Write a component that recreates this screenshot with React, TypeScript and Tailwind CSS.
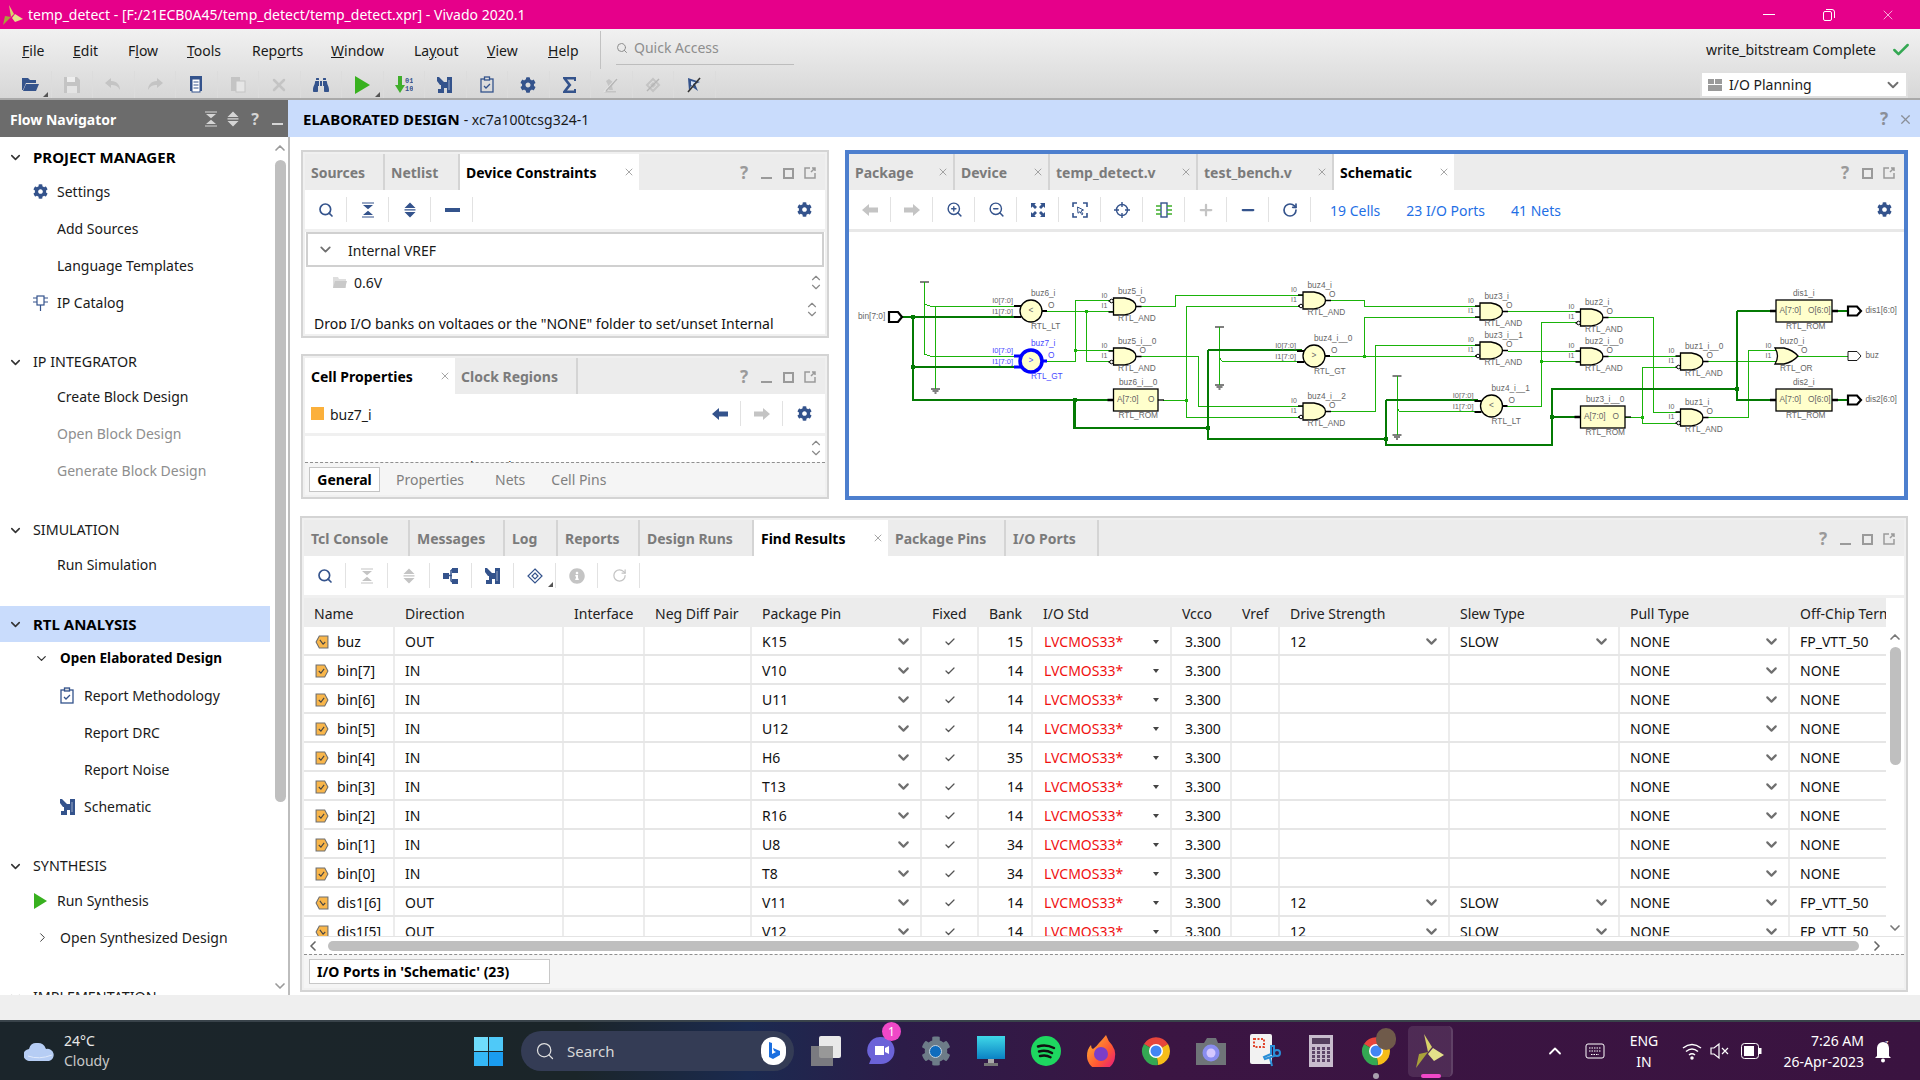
import React from "react";
import { ZoomIn, ZoomOut, RotateCw, Search, ChevronDown, ChevronUp, ChevronLeft, ChevronRight, Check, X, Plus, Minus } from "lucide-react";
import { FaCog, FaBinoculars, FaInfoCircle } from "react-icons/fa";

const NAVY = "#34538c";
const GREY = "#c4c4c4";

const Gear = ({ s = 15, c = NAVY }: { s?: number; c?: string }) => <FaCog size={s} color={c} />;

const Collapse = ({ c = NAVY }: { c?: string }) => (
  <svg width="14" height="16" viewBox="0 0 14 16"><path d="M1 .5h12v1H1zM2 3h10L7 7.300zM1 14.500h12v1H1zM2 13h10L7 8.700z" fill={c} /></svg>
);
const Expand = ({ c = NAVY }: { c?: string }) => (
  <svg width="14" height="16" viewBox="0 0 14 16"><path d="M7 0.500 12.500 6h-11zM7 15.500 1.500 10h11z" fill={c} /><path d="M1.500 7h11v.7h-11zM1.500 8.400h11v.7h-11z" fill={c} /></svg>
);
const ArrowL = ({ c = NAVY }: { c?: string }) => (
  <svg width="16" height="12" viewBox="0 0 16 12"><path d="M0 6 7 0v3.500h9v5H7V12z" fill={c} /></svg>
);
const ArrowR = ({ c = GREY }: { c?: string }) => (
  <svg width="16" height="12" viewBox="0 0 16 12"><path d="M16 6 9 0v3.500H0v5h9V12z" fill={c} /></svg>
);
const Schem = ({ c = NAVY }: { c?: string }) => (
  <svg width="16" height="16" viewBox="0 0 16 16"><path d="M0 0h2l5 5h3V0h5v16h-5v-5H7v5H1v-4h3V8H3L0 4z" fill={c} /><path d="M11 3h2v10h-2z" fill="#fff" opacity=".25" /></svg>
);
const Fit = () => (
  <svg width="16" height="16" viewBox="0 0 16 16" fill={NAVY}><path d="M1 1h5L4.500 2.500 7 5 5 7 2.500 4.500 1 6zM15 1v5l-1.500-1.500L11 7 9 5l2.500-2.500L10 1zM1 15v-5l1.500 1.500L5 9l2 2-2.500 2.500L6 15zM15 15h-5l1.500-1.500L9 11l2-2 2.500 2.500L15 10z" /></svg>
);
const Select = () => (
  <svg width="16" height="16" viewBox="0 0 16 16" fill="none" stroke={NAVY} strokeWidth="1.600"><path d="M1 5V1h4M11 1h4v4M1 11v4h4M15 11v4h-4" /><path d="M5.500 5l6 3-2.500 1 2 3-1.200.7-1.800-3-2 1.500z" strokeWidth="1" /></svg>
);
const Target = () => (
  <svg width="16" height="16" viewBox="0 0 16 16" fill="none" stroke={NAVY} strokeWidth="1.400"><circle cx="8" cy="8" r="5.500" /><path d="M8 0v5M8 11v5M0 8h5M11 8h5" /></svg>
);
const Chip = () => (
  <svg width="16" height="16" viewBox="0 0 16 16" fill="none"><rect x="5" y="1" width="6" height="14" stroke={NAVY} strokeWidth="1.400" /><path d="M0 4h5M0 8h5M0 12h5M11 4h5M11 8h5M11 12h5" stroke="#3fae2a" strokeWidth="1.600" /></svg>
);
const Doc = ({ c = NAVY }: { c?: string }) => (
  <svg width="16" height="17" viewBox="0 0 16 17"><rect x="2" y="0" width="12" height="15" fill={c} /><rect x="4" y="3" width="8" height="13" fill="#fff" stroke={c} /><path d="M5.500 6h5M5.500 9h5M5.500 12h5" stroke={c} /></svg>
);
const Paste = () => (
  <svg width="16" height="17" viewBox="0 0 16 17"><rect x="1" y="1" width="9" height="14" fill={GREY} /><rect x="6" y="5" width="9" height="11" fill="#e6e6e6" stroke={GREY} /></svg>
);
const Save = () => (
  <svg width="16" height="16" viewBox="0 0 16 16"><path d="M0 0h13l3 3v13H0z" fill={GREY} /><rect x="3" y="0" width="8" height="5" fill="#eee" /><rect x="3" y="9" width="10" height="7" fill="#e4e4e4" /></svg>
);
const Open = () => (
  <svg width="17" height="15" viewBox="0 0 17 15"><path d="M0 1h6l2 2h6v3H4L1 13H0z" fill={NAVY} /><path d="M4 7h13l-3 7H1z" fill={NAVY} /></svg>
);
const Undo = ({ flip }: { flip?: boolean }) => (
  <svg width="16" height="13" viewBox="0 0 16 13" className={flip ? "-scale-x-100" : ""}><path d="M6 0 0 5l6 5V7c4 0 7 1 9 5 0-5-3-9-9-9z" fill={GREY} /></svg>
);
const Bits = () => (
  <svg width="18" height="18" viewBox="0 0 18 18"><path d="M3 0h4v9h3l-5 8-5-8h3z" fill="#3fae2a" /><text x="10" y="7" fontSize="7" fontFamily="Liberation Mono" fontWeight="700" fill={NAVY}>01</text><text x="10" y="15" fontSize="7" fontFamily="Liberation Mono" fontWeight="700" fill={NAVY}>10</text></svg>
);
const Clip = () => (
  <svg width="14" height="17" viewBox="0 0 14 17" fill="none" stroke={NAVY} strokeWidth="1.300"><rect x="1" y="3" width="12" height="13" /><rect x="4.500" y="1" width="5" height="3" fill="#e0e0e0" /><path d="M4 10l2 2 4-4" /></svg>
);
const Sigma = () => (
  <svg width="15" height="16" viewBox="0 0 15 16"><path d="M1 0h13v4h-2V2.500H5L9.500 8 5 13.500h7V12h2v4H1v-1.500L6 8 1 1.500z" fill={NAVY} /></svg>
);
const NoHammer = () => (
  <svg width="16" height="16" viewBox="0 0 16 16"><path d="M1 14h12v1.500H1zM3 4l3-2 5 4-2 3 1 4H6L5 8z" fill={GREY} /><path d="M1 15 14 1" stroke="#e4e4e4" strokeWidth="1.600" /><path d="M3 14 14 2" stroke="#b5b5b5" strokeWidth="1.200" /></svg>
);
const NoDiamond = () => (
  <svg width="16" height="16" viewBox="0 0 16 16" fill="none"><path d="M8 2l6 6-6 6-6-6z" stroke={GREY} strokeWidth="2" /><path d="M5 8l3-3 3 3-3 3z" fill={GREY} /><path d="M2 14 14 2" stroke="#b5b5b5" strokeWidth="1.400" /></svg>
);
const NoStar = () => (
  <svg width="16" height="16" viewBox="0 0 16 16"><path d="M2 1l12 4-5 2 3 7-7-5-2 5z" fill={NAVY} /><path d="M5 4l5 1.500-3 1.500 1 3-3-2z" fill="#d8e3f5" /><path d="M2 15 14 1" stroke="#333" strokeWidth="1.600" /></svg>
);
const Folder = () => (
  <svg width="14" height="12" viewBox="0 0 14 12"><path d="M0 1h5l1 2h7v9H0z" fill="#dedede" /><path d="M2 5h12l-2 7H0z" fill="#c9c9c9" /></svg>
);
const Tree = ({ c = NAVY }: { c?: string }) => (
  <svg width="16" height="16" viewBox="0 0 16 16" fill={c}><rect x="0" y="5" width="6" height="6" /><rect x="9" y="0" width="6" height="5" /><rect x="9" y="11" width="6" height="5" /><path d="M6 7.500h3M8 2h2M8 13.500h2M8 2v11.500" stroke={c} fill="none" strokeWidth="1.500" /></svg>
);
const Diamond = () => (
  <svg width="16" height="16" viewBox="0 0 16 16" fill="none" stroke={NAVY} strokeWidth="1.200"><path d="M8 1l7 7-7 7-7-7z" /><path d="M8 5l3 3-3 3-3-3z" /></svg>
);
const Corner = () => <span className="absolute right-[3px] bottom-[1px] w-0 h-0 border-l-[5px] border-l-transparent border-b-[5px] border-b-[#555]" />;
const Ipcat = () => (
  <svg width="15" height="16" viewBox="0 0 15 16" fill="none" stroke={NAVY} strokeWidth="1.200"><rect x="4" y="1" width="7" height="9" /><path d="M0 3h4M0 7h4M11 3h4M11 7h4M7.500 10v6" /></svg>
);

const Win = ({ min = true }: { min?: boolean }) => (
  <div className="ml-auto flex items-center h-[36px] pt-[2px]">
    <span className="w-[22px] text-center text-[17px] font-bold text-[#9a9a9a]">?</span>
    {min && <span className="w-[22px] flex justify-center pt-[10px]"><span className="w-[11px] h-[2px] bg-[#9a9a9a]" /></span>}
    <span className="w-[22px] flex justify-center"><span className="w-[11px] h-[11px] border-2 border-[#9a9a9a]" /></span>
    <span className="w-[22px] flex justify-center">
      <svg width="12" height="12" viewBox="0 0 12 12" fill="none" stroke="#9a9a9a" strokeWidth="1.500"><path d="M6 1H1v10h10V6M7 5l4-4M8 1h3v3" /></svg>
    </span>
    <span className="w-[4px]" />
  </div>
);

const Tab = ({ label, active, close, className }: { label: string; active?: boolean; close?: boolean; className: string }) => (
  <div className={`h-[36px] flex items-center pl-[6px] shrink-0 ${active ? "bg-white text-black" : "bg-[#ececec] text-[#7b7b7b] border-r-2 border-[#d4d4d4]"} ${className}`}>
    <span className="text-[14px] font-bold whitespace-nowrap">{label}</span>
    {close && <X size={12} strokeWidth={1.5} className="ml-auto mr-[4px] text-[#8a8a8a]" />}
  </div>
);

const TB = ({ children, sep = true }: { children: React.ReactNode; sep?: boolean }) => (
  <div className="relative w-[42px] h-[25px] flex items-center justify-center shrink-0">
    {children}
    {sep && <span className="absolute right-0 top-0 h-[25px] w-px bg-[#e2e2e2]" />}
  </div>
);

const Panel = ({ className, children }: { className: string; children: React.ReactNode }) => (
  <div className={`flex flex-col bg-[#f0f0f0] overflow-hidden ${className}`}>{children}</div>
);

const Toolbar = ({ children }: { children: React.ReactNode }) => (
  <div className="h-[39px] bg-white flex items-center shrink-0">{children}</div>
);

/* ---------- Schematic ---------- */
const THIN = "#1ab30a";
const THICK = "#047a04";

const thin: number[][] = [
  [924.5,282,924.5,354,930,356,1014,356],[924.5,304,930,306,1014,306],[935.5,306,935.5,389],[1047,311,1113,311],
  [1047,361,1075,361,1075,300.5,1113,300.5],[1075,350,1113,350],[1086,311,1086,361,1113,361],
  [1141,306.5,1175,306.5,1175,295,1303,295],[1186,306,1303,306],[1186,306,1186,417,1303,417],[1163,400,1186,400],
  [1141,356.5,1198,356.5,1198,406,1303,406],[1219.5,327,1219.5,385],[1219.5,358,1222,361,1303,361],
  [1325,356,1478,356],[1364,356,1364,317,1480,317],[1330,300.5,1364,300.5,1364,306,1480,306],
  [1330,411.5,1375,411.5,1375,345,1480,345],[1508,311.5,1580,311.5],[1508,351,1580,351],
  [1502,406,1541,406,1541,322,1580,322],[1541,361,1580,361],[1397,376,1397,435],[1397,408,1399,411,1478,411],
  [1608,317.5,1653,317.5,1653,412,1680,412],[1608,356.5,1680,356.5],[1625,417,1642,417],[1642,367.5,1642,423],
  [1642,367.5,1678,367.5],[1642,423,1678,423],[1708,361.5,1778,361.5],[1708,417.5,1748,417.5,1748,350,1780,350],
  [1798,356,1848,356],
];
const thick: number[][] = [
  [902,317,1014,317],[913,317,913,400,1114,400],[913,367,1014,367],[1074.5,400,1074.5,428,1208,428],
  [1208,350,1208,439,1386,439],[1208,350,1302,350],[1386,400,1386,445,1552,445,1552,389,1737,389],[1386,400,1478,400],
  [1552,417,1580,417],[1737,311,1737,400,1770,400],[1737,311,1770,311],[1838,311,1848,311],[1838,400,1848,400],
];
const jun: number[][] = [[913,317],[913,367],[1074.5,400],[1208,428],[1386,439],[1552,417],[1737,389]];
const thinJun: number[][] = [[1086,311],[1075,350],[1186,400],[1364,356],[1541,361],[1642,417]];
const T = ({ x, y, s, c = "#666", size = 8.3, anchor }: { x: number; y: number; s: string; c?: string; size?: number; anchor?: "start" | "end" | "middle" }) => (
  <text x={x} y={y} fontSize={size} fill={c} fontFamily="Liberation Sans, sans-serif" dominantBaseline="middle" textAnchor={anchor}>{s}</text>
);
const ands: { x: number; t: number; n: string; b?: 0 | 1 }[] = [
  { x: 1113.5, t: 298, n: "buz5_i", b: 0 }, { x: 1113.5, t: 348, n: "buz5_i__0", b: 1 }, { x: 1303, t: 292, n: "buz4_i", b: 1 },
  { x: 1303, t: 403, n: "buz4_i__2", b: 1 }, { x: 1480, t: 303, n: "buz3_i" }, { x: 1480, t: 342, n: "buz3_i__1", b: 1 },
  { x: 1580.5, t: 309, n: "buz2_i", b: 1 }, { x: 1580.5, t: 348, n: "buz2_i__0" }, { x: 1680.5, t: 353, n: "buz1_i__0", b: 1 },
  { x: 1680.5, t: 409, n: "buz1_i", b: 1 },
];
const And = ({ x, t, n, b }: { x: number; t: number; n: string; b?: 0 | 1 }) => (
  <g>
    <path d={`M${x} ${t}h11q11.500 2 11.500 8.500t-11.500 8.500h-11z`} fill="#ffffcc" stroke="#000" strokeWidth="1.300" />
    <path d={`M${x - 5} ${t + 3}h5M${x - 5} ${t + 14}h5M${x + 22} ${t + 8.5}h6`} stroke="#000" strokeWidth="1.300" />
    {b !== undefined && <circle cx={x - 2} cy={t + (b ? 14 : 3)} r="1.800" fill="#fff" stroke="#000" />}
    <T x={x + 4.5} y={t - 6} s={n} />
    <T x={x - 9} y={t - 2} s="I0" size={7} anchor="middle" />
    <T x={x - 9} y={t + 8} s="I1" size={7} anchor="middle" />
    <T x={x + 26} y={t + 3} s="O" />
    <T x={x + 4.5} y={t + 21} s="RTL_AND" />
  </g>
);
const Cmp = ({ x, y, n, rtl, sym, blue, lx }: { x: number; y: number; n: string; rtl: string; sym: string; blue?: boolean; lx?: number }) => {
  const c = blue ? "#4a4aff" : "#666";
  const st = blue ? "#0000ff" : "#000";
  return (
    <g>
      <path d={`M${x - 17} ${y - 5}h7M${x - 17} ${y + 6}h7M${x + 11} ${y}h5`} stroke={st} strokeWidth={blue ? 3 : 1.800} />
      <circle cx={x} cy={y} r="11" fill="#ffffcc" stroke={st} strokeWidth={blue ? 3.500 : 1.300} />
      <T x={x} y={y} s={sym} c={c} anchor="middle" />
      <T x={lx ?? x} y={y - 17} s={n} c={c} />
      <T x={x - 18} y={y - 10} s="I0[7:0]" c={c} size={7.500} anchor="end" />
      <T x={x - 18} y={y + 1} s="I1[7:0]" c={c} size={7.500} anchor="end" />
      <T x={x + 17} y={y - 5} s="O" c={c} />
      <T x={lx ?? x} y={y + 16} s={rtl} c={c} />
    </g>
  );
};
const Rom = ({ x, y, w, n, lx, ox, o, ly }: { x: number; y: number; w: number; n: string; lx: number; ox: number; o: string; ly?: number }) => (
  <g>
    <rect x={x} y={y} width={w} height="22" fill="#ffffcc" stroke="#000" strokeWidth="1.300" />
    <path d={`M${x - 6} ${y + 11}h6`} stroke="#000" strokeWidth="2.500" />
    <path d={`M${x + w} ${y + 11}h6`} stroke="#000" strokeWidth={o === "O" ? 1.300 : 2.500} />
    <T x={lx} y={y - 6} s={n} />
    <T x={x + 3.5} y={y + 11} s="A[7:0]" />
    <T x={ox} y={y + 11} s={o} />
    <T x={ly ?? x + 5} y={y + 27} s="RTL_ROM" />
  </g>
);
const Rail = ({ x, t }: { x: number; t: number }) => <path d={`M${x - 4.5} ${t}h9`} stroke="#000" />;
const Gnd = ({ x, b }: { x: number; b: number }) => <path d={`M${x - 4.5} ${b}h9M${x - 3} ${b + 2}h6M${x - 1} ${b + 4}h2`} stroke="#000" />;
const Port = ({ y, heavy, n }: { y: number; heavy?: boolean; n: string }) => (
  <g>
    <path d={`M1848 ${y - 4.5}h9l4 4.500-4 4.500h-9z`} fill="#fff" stroke="#000" strokeWidth={heavy ? 2.200 : 0.900} />
    <T x={1865.5} y={y} s={n} />
  </g>
);

const Schematic = () => (
  <svg width="1055" height="264" viewBox="849 232 1055 264" className="block bg-white">
    <Rail x={924.5} t={282} />
    <Rail x={1219.5} t={327} />
    <Rail x={1397} t={376} />
    <Gnd x={935.5} b={389} />
    <Gnd x={1219.5} b={385} />
    <Gnd x={1397} b={435} />
    <g shapeRendering="crispEdges" fill="none">
      {thin.map((p, i) => <polyline key={i} points={p.join(",")} stroke={THIN} strokeWidth="1" />)}
      {thick.map((p, i) => <polyline key={i} points={p.join(",")} stroke={THICK} strokeWidth="2.200" />)}
      {jun.map(([x, y], i) => <rect key={i} x={x - 2} y={y - 2} width="4" height="4" fill={THICK} />)}
      {thinJun.map(([x, y], i) => <rect key={i} x={x - 1.5} y={y - 1.5} width="3" height="3" fill={THIN} />)}
    </g>
    <T x={858} y={317} s="bin[7:0]" />
    <path d="M889 312h9l4 5-4 5h-9z" fill="#fff" stroke="#000" strokeWidth="2.200" />
    <Cmp x={1031} y={311} n="buz6_i" rtl="RTL_LT" sym="<" />
    <Cmp x={1031} y={361} n="buz7_i" rtl="RTL_GT" sym=">" blue />
    <Cmp x={1314} y={356} n="buz4_i__0" rtl="RTL_GT" sym=">" />
    <Cmp x={1491.5} y={406} n="buz4_i__1" rtl="RTL_LT" sym="<" />
    {ands.map((a) => <And key={a.n} {...a} />)}
    <Rom x={1113.5} y={389} w={44.5} n="buz6_i__0" lx={1119} ox={1148} o="O" />
    <Rom x={1580.5} y={406} w={44.5} n="buz3_i__0" lx={1586} ox={1612.5} o="O" />
    <Rom x={1776} y={300} w={56} n="dis1_i" lx={1793} ox={1808} o="O[6:0]" ly={1786} />
    <Rom x={1776} y={389} w={56} n="dis2_i" lx={1793} ox={1808} o="O[6:0]" ly={1786} />
    <g>
      <path d="M1775 348q5 8 0 16h9q9-2 14-8-5-6-14-8z" fill="#ffffcc" stroke="#000" strokeWidth="1.300" />
      <T x={1780} y={342} s="buz0_i" />
      <T x={1768.5} y={346} s="I0" size={7} anchor="middle" />
      <T x={1768.5} y={356} s="I1" size={7} anchor="middle" />
      <T x={1801} y={351} s="O" />
      <T x={1780} y={369} s="RTL_OR" />
    </g>
    <Port y={311} heavy n="dis1[6:0]" />
    <Port y={356} n="buz" />
    <Port y={400} heavy n="dis2[6:0]" />
  </svg>
);

/* ---------- Table ---------- */
const cols = ["w-[91px]", "w-[169px]", "w-[81px]", "w-[107px]", "w-[170px]", "w-[57px]", "w-[54px]", "w-[139px]", "w-[60px]", "w-[48px]", "w-[170px]", "w-[170px]", "w-[170px]", "w-[96px]"];
const heads = ["Name", "Direction", "Interface", "Neg Diff Pair", "Package Pin", "Fixed", "Bank", "I/O Std", "Vcco", "Vref", "Drive Strength", "Slew Type", "Pull Type", "Off-Chip Termination"];
type R = [string, string, string, string];
const rows: R[] = [
  ["buz", "OUT", "K15", "15"], ["bin[7]", "IN", "V10", "14"], ["bin[6]", "IN", "U11", "14"], ["bin[5]", "IN", "U12", "14"],
  ["bin[4]", "IN", "H6", "35"], ["bin[3]", "IN", "T13", "14"], ["bin[2]", "IN", "R16", "14"], ["bin[1]", "IN", "U8", "34"],
  ["bin[0]", "IN", "T8", "34"], ["dis1[6]", "OUT", "V11", "14"], ["dis1[5]", "OUT", "V12", "14"],
];
const PortIcon = ({ out }: { out: boolean }) => (
  <svg width="14" height="14" viewBox="0 0 13 13" className={`shrink-0 ${out ? "-scale-x-100" : ""}`}>
    <path d="M1 1h8l3 5.500-3 5.500H1z" fill="#f9b64a" stroke="#6e6e6e" />
    <path d="M3.500 6.500l2 2 3-4" fill="none" stroke="#444" />
  </svg>
);
const Cell = ({ i, children, cn = "" }: { i: number; children?: React.ReactNode; cn?: string }) => (
  <div className={`${cols[i]} shrink-0 h-full flex items-center pt-[2px] pl-[10px] pr-[10px] border-r-2 border-[#ececec] overflow-hidden whitespace-nowrap ${cn}`}>{children}</div>
);
const Dd = () => <ChevronDown size={17} strokeWidth={3} className="ml-auto -mr-[2px] text-[#6f6f6f] shrink-0" />;

const IOTable = () => (
  <div className="h-[338px] overflow-hidden bg-white flex-1 min-w-0">
    <div className="h-[29px] flex bg-[#ececec] text-[#222]">
      {heads.map((h, i) => <Cell key={h} i={i} cn={i === 0 ? "!pl-[10px] border-[#dcdcdc]" : i === 13 ? "!pr-0 !border-0" : "border-[#dcdcdc]"}>{h}</Cell>)}
    </div>
    {rows.map(([n, d, p, b]) => {
      const out = d === "OUT";
      return (
        <div key={n} className="h-[29px] flex border-b-2 border-[#e6e6e6] text-[#111]">
          <Cell i={0} cn="!pl-[11px] gap-[8px]"><PortIcon out={out} /><span>{n}</span></Cell>
          <Cell i={1}>{d}</Cell>
          <Cell i={2} />
          <Cell i={3} />
          <Cell i={4}><span>{p}</span><Dd /></Cell>
          <Cell i={5} cn="justify-center !pl-0 !pr-0"><Check size={12} strokeWidth={2.5} className="text-[#555]" /></Cell>
          <Cell i={6} cn="justify-end !pr-[8px] !pl-0">{b}</Cell>
          <Cell i={7} cn="!pl-[11px]"><span className="text-[#f01010]">LVCMOS33*</span><span className="ml-auto mr-[1px] w-0 h-0 border-x-[3.5px] border-x-transparent border-t-[4px] border-t-[#444]" /></Cell>
          <Cell i={8} cn="!pl-[13px]">3.300</Cell>
          <Cell i={9} />
          <Cell i={10}>{out && <><span>12</span><Dd /></>}</Cell>
          <Cell i={11}>{out && <><span>SLOW</span><Dd /></>}</Cell>
          <Cell i={12}><span>NONE</span><Dd /></Cell>
          <Cell i={13} cn="!border-0 !pr-0">{out ? "FP_VTT_50" : "NONE"}</Cell>
        </div>
      );
    })}
  </div>
);

/* ---------- Nav ---------- */
const Sec = ({ label, bold, active, mt = true }: { label: string; bold?: boolean; active?: boolean; mt?: boolean }) => (
  <div className={`flex items-center shrink-0 ${active ? "bg-[#c9dcfc] h-[36px] mt-[23px] -mb-[2px] relative z-0" : "h-[32px]"} ${!active && mt ? "mt-[25px]" : ""}`}>
    <ChevronDown size={15} strokeWidth={2.5} className="ml-[8px] text-[#333]" />
    <span className={`ml-[10px] whitespace-nowrap ${bold ? "text-[15px] font-bold text-black" : "text-[14.3px] text-[#1a1a1a]"}`}>{label}</span>
  </div>
);
const Item = ({ label, icon, pl, grey, bold }: { label: string; icon?: React.ReactNode; pl: string; grey?: boolean; bold?: boolean }) => (
  <div className={`h-[37px] flex items-center shrink-0 relative ${pl}`}>
    {icon}
    <span className={`whitespace-nowrap ${grey ? "text-[#8e8e8e]" : "text-[#1a1a1a]"} ${bold ? "text-[13.5px] font-bold text-black" : "text-[14px]"}`}>{label}</span>
  </div>
);
const IcoL = ({ children, cn }: { children: React.ReactNode; cn: string }) => <span className={`absolute top-0 h-full flex items-center ${cn}`}>{children}</span>;

const Nav = () => (
  <div className="w-[290px] shrink-0 flex border-r-2 border-[#bdbdbd] h-full bg-white">
    <div className="w-[270px] pt-[4px] overflow-hidden h-full flex flex-col">
      <Sec label="PROJECT MANAGER" bold mt={false} />
      <Item pl="pl-[57px]" label="Settings" icon={<IcoL cn="left-[33px]"><Gear /></IcoL>} />
      <Item pl="pl-[57px]" label="Add Sources" />
      <Item pl="pl-[57px]" label="Language Templates" />
      <Item pl="pl-[57px]" label="IP Catalog" icon={<IcoL cn="left-[33px]"><Ipcat /></IcoL>} />
      <Sec label="IP INTEGRATOR" />
      <Item pl="pl-[57px]" label="Create Block Design" />
      <Item pl="pl-[57px]" label="Open Block Design" grey />
      <Item pl="pl-[57px]" label="Generate Block Design" grey />
      <Sec label="SIMULATION" />
      <Item pl="pl-[57px]" label="Run Simulation" />
      <Sec label="RTL ANALYSIS" bold active />
      <Item pl="pl-[60px]" bold label="Open Elaborated Design" icon={<IcoL cn="left-[34px]"><ChevronDown size={15} strokeWidth={2} className="text-[#333]" /></IcoL>} />
      <Item pl="pl-[84px]" label="Report Methodology" icon={<IcoL cn="left-[60px]"><Clip /></IcoL>} />
      <Item pl="pl-[84px]" label="Report DRC" />
      <Item pl="pl-[84px]" label="Report Noise" />
      <Item pl="pl-[84px]" label="Schematic" icon={<IcoL cn="left-[60px]"><Schem /></IcoL>} />
      <Sec label="SYNTHESIS" />
      <Item pl="pl-[57px]" label="Run Synthesis" icon={<IcoL cn="left-[34px]"><svg width="13" height="16" viewBox="0 0 13 16"><path d="M0 0l13 8-13 8z" fill="#38b11f" /></svg></IcoL>} />
      <Item pl="pl-[60px]" label="Open Synthesized Design" icon={<IcoL cn="left-[35px]"><ChevronRight size={15} strokeWidth={1.5} className="text-[#333]" /></IcoL>} />
      <Sec label="IMPLEMENTATION" />
    </div>
    <div className="w-[18px] flex flex-col items-center pt-[3px]">
      <ChevronUp size={16} strokeWidth={2.5} className="text-[#9a9a9a] ml-[2px]" />
      <div className="w-[11px] h-[642px] mt-[4px] ml-[3px] rounded-full bg-[#bfbfbf]" />
      <ChevronDown size={16} strokeWidth={2.5} className="mt-auto mb-[1px] ml-[2px] text-[#9a9a9a]" />
    </div>
  </div>
);

/* ---------- Taskbar icons ---------- */
const ChromeI = () => (
  <svg width="30" height="30" viewBox="0 0 30 30">
    <path d="M15 15 3 8a14 14 0 0 1 24 0z" fill="#e8453c" />
    <path d="M15 15 27 8a14 14 0 0 1-10 21z" fill="#f6bd19" />
    <path d="M15 15 17 29A14 14 0 0 1 3 8z" fill="#34a853" />
    <circle cx="15" cy="15" r="7" fill="#fff" />
    <circle cx="15" cy="15" r="5.500" fill="#4285f4" />
  </svg>
);
const TI = ({ children }: { children: React.ReactNode }) => <div className="relative w-[55px] h-[60px] flex items-center justify-center shrink-0">{children}</div>;

const Taskbar = () => (
  <div className="h-[60px] shrink-0 flex items-center border-t-2 border-[#39434a] text-white bg-[linear-gradient(90deg,#1b252b_0%,#1b2529_30%,#1b2a50_39%,#2c1c48_47%,#3b1543_60%,#3a1340_100%)]">
    <div className="w-[474px] shrink-0 pl-[24px] flex items-center gap-[9px]">
      <svg width="31" height="20" viewBox="0 0 31 20"><path d="M6 20a6 6 0 0 1-1-12 7 7 0 0 1 8-6 8 8 0 0 1 9 6 6 6 0 0 1 3 12z" fill="#b6cdf4" /><path d="M4 15q11 4 24-1" stroke="#dfe9fb" fill="none" /></svg>
      <div className="text-[14px] leading-[20px] text-[#e8e8e8] -mt-[1px]"><div>24°C</div><div className="text-[#c8c8c8]">Cloudy</div></div>
    </div>
    <div className="w-[29px] h-[29px] shrink-0 grid grid-cols-2 gap-px">
      <span className="bg-[#6fdcfb]" /><span className="bg-[#4fc9f8]" /><span className="bg-[#35b8f7]" /><span className="bg-[#1a9cf0]" />
    </div>
    <div className="ml-[18px] w-[273px] h-[40px] rounded-full bg-[#343c55] flex items-center pl-[14px] pr-[8px] shrink-0">
      <Search size={20} strokeWidth={1.5} className="text-[#e0e0e0]" />
      <span className="ml-[12px] text-[15px] text-[#d8d8d8]">Search</span>
      <span className="ml-auto w-[25px] h-[28px] rounded-[12px] bg-white flex items-center justify-center">
        <svg width="12" height="18" viewBox="0 0 12 18"><path d="M1 0l3 1v11l4-2-2-1-1-3 7 3v4l-7 4-4-2z" fill="#1a6fe0" /></svg>
      </span>
    </div>
    <div className="ml-[4px] flex items-center">
      <TI><span className="w-[30px] h-[30px] relative"><span className="absolute right-0 top-0 w-[22px] h-[22px] rounded-[2px] bg-[#e9e9e9]" /><span className="absolute left-0 bottom-0 w-[22px] h-[20px] bg-[#8a8a8a]/85" /></span></TI>
      <TI>
        <svg width="30" height="32" viewBox="0 0 30 32"><path d="M15 2a13 13 0 0 1 0 27H3l2-5a13 13 0 0 1 10-22z" fill="#6b63d8" /><path d="M9 11h9v9H9zM19 13l4-2v8l-4-2z" fill="#fff" /></svg>
        <span className="absolute top-[1px] right-[7px] w-[19px] h-[19px] rounded-full bg-[#f048c8] text-[12px] flex items-center justify-center">1</span>
      </TI>
      <TI>
        <FaCog size={30} color="#6d7c88" />
        <span className="absolute w-[13px] h-[13px] rounded-full bg-[#0f6cbd] border border-[#c7d4de]" />
      </TI>
      <TI><svg width="28" height="30" viewBox="0 0 28 30"><defs><linearGradient id="mon" x1="0" y1="0" x2="0" y2="1"><stop offset="0" stopColor="#3fd8e8" /><stop offset="1" stopColor="#0b82c4" /></linearGradient></defs><rect y="0" width="28" height="23" fill="url(#mon)" /><rect x="11" y="23" width="6" height="4" fill="#aaa" /><rect x="7" y="27" width="14" height="3" fill="#777" /></svg></TI>
      <TI><svg width="30" height="30" viewBox="0 0 30 30"><circle cx="15" cy="15" r="15" fill="#1ed760" /><path d="M7 10.500q8-2.500 16 1.500M8 15.500q7-2 13 1.500M9 20q6-1.500 10.500 1.200" stroke="#111" strokeWidth="2.500" fill="none" strokeLinecap="round" /></svg></TI>
      <TI><svg width="30" height="32" viewBox="0 0 30 32"><defs><linearGradient id="ff" x1="0" y1="0" x2="1" y2="1"><stop offset="0" stopColor="#ffbd2e" /><stop offset=".6" stopColor="#ff5634" /><stop offset="1" stopColor="#e31587" /></linearGradient></defs><path d="M20 0q2 6 6 10 4 6 3 11a14 14 0 0 1-28 0q0-7 4-11 0 3 2 4 4-3 6-6 3-3 7-8z" fill="url(#ff)" /><circle cx="15" cy="19" r="7" fill="#7a3ec8" /></svg></TI>
      <TI><ChromeI /></TI>
      <TI><svg width="30" height="28" viewBox="0 0 30 28"><path d="M0 6h8l3-5h9l2 5h8v22H0z" fill="#6f7478" /><circle cx="15" cy="16" r="8.500" fill="#8a8df0" /><circle cx="15" cy="16" r="4.500" fill="#d5c8ff" /></svg></TI>
      <TI><svg width="32" height="34" viewBox="0 0 32 34"><rect width="22" height="30" rx="2" fill="#f2f2f2" /><path d="M4 5h10v8H4z" fill="none" stroke="#e0452c" strokeWidth="2" strokeDasharray="2 1.500" /><path d="M24 12v10l-9 3-1-2 7-3v-8zM20 24l2 8" stroke="#2a8fd8" strokeWidth="2" fill="none" /><circle cx="27" cy="19" r="3" fill="none" stroke="#2a8fd8" strokeWidth="2" /></svg></TI>
      <TI><svg width="24" height="32" viewBox="0 0 24 32"><rect width="24" height="32" fill="#c8bccd" /><rect x="3" y="3" width="18" height="6" fill="#55405e" /><g fill="#5d4568">{[12, 16, 20, 24].map((y) => [3, 8, 13, 18].map((x) => <rect key={`${x}${y}`} x={x} y={y} width="3" height="3" />))}</g></svg></TI>
      <TI>
        <ChromeI />
        <span className="absolute top-[7px] right-[7px] w-[20px] h-[22px] rounded-full bg-[#6f5a4a]" />
        <span className="absolute bottom-[2px] w-[6px] h-[6px] rounded-full bg-[#a9a0ae]" />
      </TI>
      <TI>
        <span className="absolute top-[5px] bottom-[4px] left-[5px] right-[5px] rounded-[5px] bg-white/10 border-r-2 border-white/10" />
        <svg width="30" height="34" viewBox="0 0 30 34" className="relative"><path d="M8 0l8 13-4 5z" fill="#d9d26a" /><path d="M12 18 0 34l3-14z" fill="#a9a13a" /><path d="M17 14l11 7-10 6-6-7z" fill="#e4e18a" /></svg>
        <span className="absolute bottom-[3px] w-[20px] h-[4px] rounded-full bg-[#f048c8]" />
      </TI>
    </div>
    <ChevronUp size={20} strokeWidth={2.2} className="ml-[87px] text-white shrink-0" />
    <svg width="20" height="20" viewBox="0 0 20 20" className="ml-[20px] shrink-0" fill="none" stroke="#fff"><rect x="1" y="3" width="18" height="14" rx="2" /><path d="M4 7h12M4 10h12M6 13.500h8" strokeDasharray="1.500 1" /></svg>
    <div className="ml-[20px] w-[38px] text-center text-[14px] leading-[21px] shrink-0"><div>ENG</div><div>IN</div></div>
    <svg width="20" height="18" viewBox="0 0 20 18" className="ml-[19px] shrink-0" fill="none" stroke="#fff" strokeWidth="1.500"><path d="M1 6q9-7 18 0M4 9.500q6-5 12 0M7 13q3-2.500 6 0" /><circle cx="10" cy="16" r="1" fill="#fff" /></svg>
    <svg width="20" height="18" viewBox="0 0 20 18" className="ml-[8px] shrink-0" fill="none" stroke="#fff" strokeWidth="1.200"><path d="M1 6h3l5-4v14l-5-4H1zM12 6l6 6M18 6l-6 6" /></svg>
    <svg width="21" height="16" viewBox="0 0 21 16" className="ml-[11px] shrink-0"><rect x=".5" y=".5" width="17" height="15" rx="3" fill="none" stroke="#fff" /><rect x="3" y="3" width="10" height="10" fill="#fff" /><rect x="18" y="5" width="2.500" height="6" fill="#fff" /></svg>
    <div className="ml-[16px] text-[14px] leading-[21px] text-right w-[86px] whitespace-nowrap shrink-0"><div>7:26 AM</div><div>26-Apr-2023</div></div>
    <svg width="18" height="24" viewBox="0 0 18 24" className="ml-[10px] shrink-0" fill="#fff"><path d="M3 17V9a6 6 0 0 1 12 0v8l2 2H1z" /><circle cx="9" cy="21.500" r="2" /><text x="11" y="6" fontSize="7" fontFamily="Liberation Sans">z</text></svg>
  </div>
);

export default function App() {
  return (
    <div className="w-[1920px] h-[1080px] flex flex-col overflow-hidden bg-[#efefef] font-['Noto_Sans',sans-serif] text-[14px] text-[#1a1a1a]">
      {/* Title bar */}
      <div className="h-[29px] shrink-0 bg-[#e6008a] flex items-center text-white">
        <svg width="22" height="20" viewBox="0 0 22 20" className="ml-[3px]"><path d="M6 0l5 9-3 3z" fill="#d9d26a" /><path d="M8 12 0 20l2-9z" fill="#a9a13a" /><path d="M12 9l8 5-8 3-3-4z" fill="#e4e18a" /></svg>
        <span className="ml-[3px] text-[14px] whitespace-nowrap">temp_detect - [F:/21ECB0A45/temp_detect/temp_detect.xpr] - Vivado 2020.1</span>
        <div className="ml-auto flex items-center">
          <span className="w-[58px] flex justify-center"><span className="w-[12px] h-px bg-white" /></span>
          <span className="w-[60px] flex justify-center pl-[1px]"><svg width="12" height="12" viewBox="0 0 12 12" fill="none" stroke="#fff"><rect x=".5" y="2.500" width="8" height="9" rx="1.500" /><path d="M3 .5h6q2.500 0 2.500 2.500v6" /></svg></span>
          <span className="w-[60px] flex justify-center"><X size={16} strokeWidth={1} /></span>
          <span className="w-[2px]" />
        </div>
      </div>
      {/* Menu + toolbar */}
      <div className="h-[71px] shrink-0 flex flex-col border-b-2 border-[#a9a9a9] bg-[linear-gradient(#f1f1f1,#d7d7d7)]">
        <div className="h-[42px] flex items-center pl-[22px]">
          <span className="w-[51px]"><u>F</u>ile</span>
          <span className="w-[55px]"><u>E</u>dit</span>
          <span className="w-[59px]">F<u>l</u>ow</span>
          <span className="w-[65px]"><u>T</u>ools</span>
          <span className="w-[79px]">Rep<u>o</u>rts</span>
          <span className="w-[83px]"><u>W</u>indow</span>
          <span className="w-[73px]">La<u>y</u>out</span>
          <span className="w-[61px]"><u>V</u>iew</span>
          <span className="w-[52px]"><u>H</u>elp</span>
          <span className="h-[38px] w-px bg-[#c2c2c2]" />
          <div className="ml-[15px] w-[178px] h-[30px] pb-[4px] border-b border-[#bdbdbd] flex items-center gap-[6px] text-[#8e8e8e]">
            <Search size={12} strokeWidth={2} />
            <span>Quick Access</span>
          </div>
          <span className="ml-auto text-[#1a1a1a] whitespace-nowrap pb-[2px]">write_bitstream Complete</span>
          <Check size={20} strokeWidth={3} className="ml-[15px] mr-[9px] text-[#34a853]" />
        </div>
        <div className="h-[27px] flex items-center pl-[10px]">
          {[
            <Open />, <Save />, <Undo />, <Undo flip />, <Doc />, <Paste />, <X size={20} strokeWidth={3} color={GREY} />, <FaBinoculars size={16} color={NAVY} />,
            <svg width="15" height="18" viewBox="0 0 15 18"><path d="M0 0l15 9-15 9z" fill="#38b11f" /></svg>, <Bits />, <Schem />, <Clip />, <Gear s={16} />, <Sigma />, <NoHammer />, <NoDiamond />, <NoStar />,
          ].map((ic, i) => (
            <span key={i} className="relative w-[41.5px] h-[27px] flex items-center justify-center shrink-0 border-r border-[#dcdcdc]">
              {ic}
              {(i === 0 || i === 8) && <Corner />}
            </span>
          ))}
          <div className="ml-auto mr-[12px] w-[208px] h-[27px] bg-white border-2 border-[#e0e0e0] flex items-center pl-[6px] pr-[4px]">
            <svg width="14" height="12" viewBox="0 0 14 12" fill="#9a9a9a"><rect width="6" height="5" /><rect x="7" width="7" height="5" /><rect y="6" width="14" height="6" /></svg>
            <span className="ml-[7px]">I/O Planning</span>
            <ChevronDown size={18} strokeWidth={2.5} className="ml-auto text-[#6f6f6f]" />
          </div>
        </div>
      </div>
      {/* Header row */}
      <div className="h-[37px] shrink-0 flex">
        <div className="w-[288px] bg-[#6c6c6c] flex items-center pl-[10px] text-white">
          <span className="font-bold text-[14px] pt-[1px]">Flow Navigator</span>
          <div className="ml-auto flex items-center text-[#d5d5d5]">
            <span className="w-[22px] flex justify-center"><Collapse c="#d5d5d5" /></span>
            <span className="w-[22px] flex justify-center"><Expand c="#d5d5d5" /></span>
            <span className="w-[22px] text-center text-[16px] font-bold">?</span>
            <span className="w-[22px] flex justify-center pt-[11px]"><span className="w-[11px] h-[2px] bg-[#d5d5d5]" /></span>
          </div>
        </div>
        <div className="flex-1 bg-[#c9dcfc] flex items-center pl-[15px] pt-[1px]">
          <span className="font-bold text-black text-[15px]">ELABORATED DESIGN</span>
          <span className="ml-[4px]">- xc7a100tcsg324-1</span>
          <span className="ml-auto text-[17px] font-bold text-[#8a8f98]">?</span>
          <X size={15} strokeWidth={2} className="ml-[10px] mr-[7px] text-[#8a8f98]" />
        </div>
      </div>
      {/* Body */}
      <div className="h-[858px] shrink-0 flex overflow-hidden bg-white">
        <Nav />
        <div className="flex-1 pl-[10px] pr-[12px] pt-[13px]">
          <div className="flex pl-[1px] h-[350px] gap-[16px]">
            <div className="w-[528px] flex flex-col gap-[16px]">
              <Panel className="h-[188px] border-2 border-[#d4d4d4] p-[2px]">
                <div className="flex bg-[#ececec] h-[36px] shrink-0">
                  <Tab label="Sources" className="w-[80px]" />
                  <Tab label="Netlist" className="w-[75px]" />
                  <Tab label="Device Constraints" active close className="w-[179px]" />
                  <Win />
                </div>
                <Toolbar>
                  <TB><Search size={16} strokeWidth={2.5} color={NAVY} /></TB>
                  <TB><Collapse /></TB>
                  <TB><Expand /></TB>
                  <TB><span className="w-[15px] h-[4px] bg-[#34538c]" /></TB>
                  <span className="ml-auto mr-[13px] flex"><Gear /></span>
                </Toolbar>
                <div className="mt-[3px] bg-white flex-1 min-h-0 flex flex-col overflow-hidden">
                  <div className="h-[35px] shrink-0 border-2 border-[#d0d0d0] mx-px flex items-center pl-[9px]">
                    <ChevronDown size={17} strokeWidth={2.5} className="text-[#6f6f6f]" />
                    <span className="ml-[14px] pt-[1px]">Internal VREF</span>
                  </div>
                  <div className="h-[30px] shrink-0 flex items-center pl-[28px]">
                    <Folder /><span className="ml-[7px]">0.6V</span>
                    <span className="ml-auto mr-[2px] flex flex-col text-[#8a8a8a] -space-y-[5px]"><ChevronUp size={14} /><ChevronDown size={14} /></span>
                  </div>
                  <div className="h-[32px] shrink-0 flex overflow-hidden pt-[17px] pl-[9px]">
                    <span className="whitespace-nowrap leading-[20px] text-[#111]">Drop I/O banks on voltages or the "NONE" folder to set/unset Internal</span>
                    <span className="ml-auto mr-[6px] -mt-[16px] flex flex-col text-[#8a8a8a] -space-y-[5px]"><ChevronUp size={14} /><ChevronDown size={14} /></span>
                  </div>
                </div>
              </Panel>
              <Panel className="h-[145px] border-2 border-[#d4d4d4] p-[2px]">
                <div className="flex bg-[#ececec] h-[36px] shrink-0">
                  <Tab label="Cell Properties" active close className="w-[150px]" />
                  <Tab label="Clock Regions" className="w-[123px]" />
                  <Win />
                </div>
                <Toolbar>
                  <span className="ml-[6px] w-[13px] h-[13px] bg-[#fbb03b]" />
                  <span className="ml-[6px] pt-[2px]">buz7_i</span>
                  <div className="ml-auto flex items-center">
                    <TB><ArrowL /></TB>
                    <TB><ArrowR /></TB>
                    <TB sep={false}><Gear /></TB>
                  </div>
                </Toolbar>
                <div className="mt-[3px] h-[26px] shrink-0 bg-white flex overflow-hidden pt-[21px] pl-[17px]">
                  <span className="w-[148px] leading-[20px] text-[#111] shrink-0">Name:</span>
                  <span className="leading-[20px] text-[#111]">buz7_i</span>
                  <span className="ml-auto mr-[2px] -mt-[21px] flex flex-col text-[#8a8a8a] -space-y-[4px]"><ChevronUp size={14} /><ChevronDown size={14} /></span>
                </div>
                <div className="flex-1 border-t border-dashed border-[#8f8f8f] bg-[#f5f5f5] flex items-center pl-[4px]">
                  <span className="w-[71px] h-[25px] border border-[#c4c4c4] bg-white font-bold text-black flex items-center justify-center">General</span>
                  <span className="ml-[16px] text-[#7f7f7f]">Properties</span>
                  <span className="ml-[31px] text-[#7f7f7f]">Nets</span>
                  <span className="ml-[26px] text-[#7f7f7f]">Cell Pins</span>
                </div>
              </Panel>
            </div>
            <div className="flex-1 min-w-0 flex flex-col border-4 border-[#4d7fce] bg-white overflow-hidden">
              <div className="flex bg-[#ececec] h-[36px] shrink-0">
                <Tab label="Package" close className="w-[106px]" />
                <Tab label="Device" close className="w-[95px]" />
                <Tab label="temp_detect.v" close className="w-[148px]" />
                <Tab label="test_bench.v" close className="w-[136px]" />
                <Tab label="Schematic" active close className="w-[120px]" />
                <Win min={false} />
              </div>
              <Toolbar>
                <TB><ArrowL c={GREY} /></TB>
                <TB><ArrowR /></TB>
                <TB><ZoomIn size={17} strokeWidth={2} color={NAVY} /></TB>
                <TB><ZoomOut size={17} strokeWidth={2} color={NAVY} /></TB>
                <TB><Fit /></TB>
                <TB><Select /></TB>
                <TB><Target /></TB>
                <TB><Chip /></TB>
                <TB><Plus size={18} strokeWidth={3} color={GREY} /></TB>
                <TB><Minus size={18} strokeWidth={3} color={NAVY} /></TB>
                <TB><RotateCw size={16} strokeWidth={2.5} color={NAVY} /></TB>
                <span className="ml-[19px] pt-[2px] text-[#1f6fe5]">19 Cells</span>
                <span className="ml-[26px] pt-[2px] text-[#1f6fe5]">23 I/O Ports</span>
                <span className="ml-[26px] pt-[2px] text-[#1f6fe5]">41 Nets</span>
                <span className="ml-auto mr-[12px] flex"><Gear /></span>
              </Toolbar>
              <div className="h-[3px] shrink-0 bg-[#e8e8e8]" />
              <Schematic />
            </div>
          </div>
          <Panel className="mt-[16px] h-[476px] border-2 border-[#d4d4d4] p-[2px] w-[1608px]">
            <div className="flex bg-[#ececec] h-[36px] shrink-0">
              <Tab label="Tcl Console" className="w-[106px] !pl-[7px]" />
              <Tab label="Messages" className="w-[95px] !pl-[7px]" />
              <Tab label="Log" className="w-[53px] !pl-[7px]" />
              <Tab label="Reports" className="w-[82px] !pl-[7px]" />
              <Tab label="Design Runs" className="w-[114px] !pl-[7px]" />
              <Tab label="Find Results" active close className="w-[134px] !pl-[7px]" />
              <Tab label="Package Pins" className="w-[118px] !pl-[7px]" />
              <Tab label="I/O Ports" className="w-[93px] !pl-[7px]" />
              <Win />
            </div>
            <Toolbar>
              <TB><Search size={16} strokeWidth={2.5} color={NAVY} /></TB>
              <TB><Collapse c={GREY} /></TB>
              <TB><Expand c={GREY} /></TB>
              <TB><Tree /></TB>
              <TB><Schem /></TB>
              <TB><Diamond /><Corner /></TB>
              <TB><FaInfoCircle size={16} color={GREY} /></TB>
              <TB><RotateCw size={15} strokeWidth={2} color={GREY} /></TB>
            </Toolbar>
            <div className="mt-[3px] flex shrink-0 bg-white">
              <IOTable />
              <div className="w-[18px] shrink-0 flex flex-col items-center pt-[31px]">
                <ChevronUp size={16} strokeWidth={2.5} className="text-[#777]" />
                <div className="w-[11px] h-[118px] mt-[2px] rounded-full bg-[#bfbfbf]" />
                <ChevronDown size={16} strokeWidth={2.5} className="mt-auto text-[#777]" />
              </div>
            </div>
            <div className="h-[18px] shrink-0 bg-white flex items-center border-t border-[#e4e4e4] pl-[1px]">
              <ChevronLeft size={16} strokeWidth={2.5} className="text-[#666]" />
              <div className="ml-[7px] w-[1531px] h-[10px] rounded-full bg-[#bfbfbf]" />
              <ChevronRight size={16} strokeWidth={2.5} className="ml-[10px] text-[#666]" />
            </div>
            <div className="flex-1 border-t border-dashed border-[#8f8f8f] bg-[#f5f5f5] flex items-center pl-[5px]">
              <span className="w-[241px] h-[25px] border border-[#c8c8c8] bg-white font-bold text-black flex items-center pl-[7px] whitespace-nowrap">I/O Ports in 'Schematic' (23)</span>
            </div>
          </Panel>
        </div>
      </div>
      <div className="h-[25px] shrink-0 bg-[#efefef]" />
      <Taskbar />
    </div>
  );
}
